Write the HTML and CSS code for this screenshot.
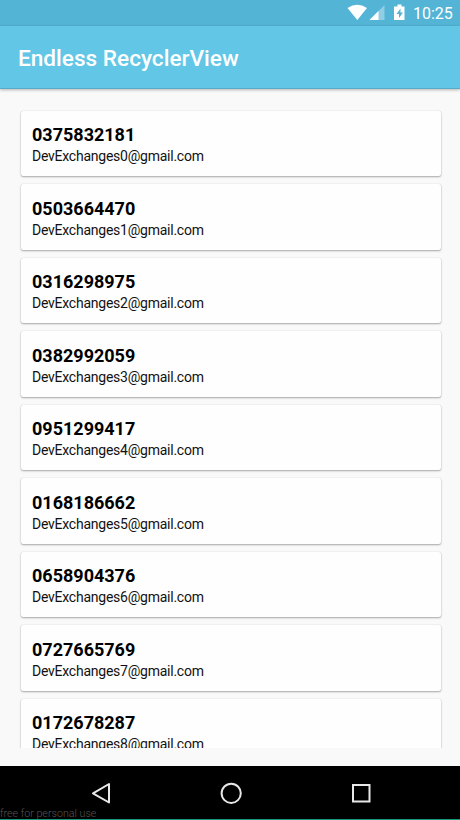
FILE: index.html
```html
<!DOCTYPE html>
<html lang="en">
<head>
<meta charset="utf-8">
<title>Endless RecyclerView</title>
<link rel="stylesheet" href="styles.css">
</head>
<body>
<div class="screen">
  <div class="status">
    <svg class="icons" width="60" height="26" viewBox="0 0 60 26">
      <path d="M0.5 8 Q10.3 1.5 20 8 L10.3 20Z" fill="#fff"/>
      <path d="M37.5 5V20H22.500Z" fill="#fff" opacity=".35"/>
      <path d="M31.500 11V20H22.500Z" fill="#fff"/>
      <path d="M50.500 4.500h4v2h3V20H47V6.500h3.500z" fill="#fff"/>
      <path d="M53.500 8.500l-4 5.500h2.500v4l4-5.500h-2.500z" fill="#53b4d6"/>
    </svg>
    <span class="clock">10:25</span>
  </div>
  <header class="bar"><h1>Endless RecyclerView</h1></header>
  <main class="list">
    <article class="card"><b>0375832181</b><p>DevExchanges0@gmail.com</p></article>
    <article class="card"><b>0503664470</b><p>DevExchanges1@gmail.com</p></article>
    <article class="card"><b>0316298975</b><p>DevExchanges2@gmail.com</p></article>
    <article class="card"><b>0382992059</b><p>DevExchanges3@gmail.com</p></article>
    <article class="card"><b>0951299417</b><p>DevExchanges4@gmail.com</p></article>
    <article class="card"><b>0168186662</b><p>DevExchanges5@gmail.com</p></article>
    <article class="card"><b>0658904376</b><p>DevExchanges6@gmail.com</p></article>
    <article class="card"><b>0727665769</b><p>DevExchanges7@gmail.com</p></article>
    <article class="card"><b>0172678287</b><p>DevExchanges8@gmail.com</p></article>
  </main>
  <nav class="nav">
    <svg width="460" height="52" viewBox="0 0 460 52" fill="none" stroke="#e8e8e8" stroke-width="2">
      <path d="M109 18V36.500L93 27.300Z" stroke-linejoin="round"/>
      <circle cx="231.200" cy="27.300" r="9.600"/>
      <rect x="353" y="19" width="16.500" height="16.500"/>
    </svg>
    <span class="mark">free for personal use</span>
  </nav>
</div>
</body>
</html>
```
FILE: styles.css
```css
* { box-sizing: border-box; }
body { margin: 0; font-family: Roboto, sans-serif; }
.screen {
  width: 460px;
  height: 820px;
  display: flex;
  flex-direction: column;
  overflow: hidden;
  background: #f9f9f9;
}
.status {
  height: 26px;
  flex: none;
  display: flex;
  justify-content: flex-end;
  padding-right: 7px;
  background: #53b4d6;
  color: #fff;
}
.icons { margin-right: 6px; }
.clock { font-size: 16px; font-weight: 400; line-height: 27px; width: 40px; white-space: nowrap; }
.bar {
  height: 63px;
  flex: none;
  padding-left: 18px;
  background: #62c6e6;
  border-bottom: 1px solid #57abc6;
  box-shadow: 0 1px 3px rgba(0, 0, 0, .28);
}
.bar h1 { margin: 0; color: #fff; font-size: 22.600px; font-weight: 500; line-height: 66px; }
.list {
  height: 659px;
  flex: none;
  padding: 21.500px 19px 0 21px;
  display: flex;
  flex-direction: column;
  gap: 8px;
  overflow: hidden;
}
.card {
  height: 65.500px;
  flex: none;
  padding: 12.500px 11px 0;
  border-radius: 2px;
  background: #fefefe;
  box-shadow: 0 1px 2px rgba(0, 0, 0, .32), 0 0 1px rgba(0, 0, 0, .2);
}
.card b { display: block; font-size: 18px; line-height: 23px; color: #000; }
.card p { margin: 0; font-size: 14px; letter-spacing: -.24px; line-height: 20px; color: #111; }
.nav {
  height: 54px;
  flex: none;
  margin-top: 18px;
  position: relative;
  background: #000;
  border-bottom: 1px solid #14977a;
}
.nav svg { display: block; }
.mark { position: absolute; left: 0; bottom: -1px; color: #555; font-size: 10.700px; font-weight: 300; line-height: 13px; }
```
